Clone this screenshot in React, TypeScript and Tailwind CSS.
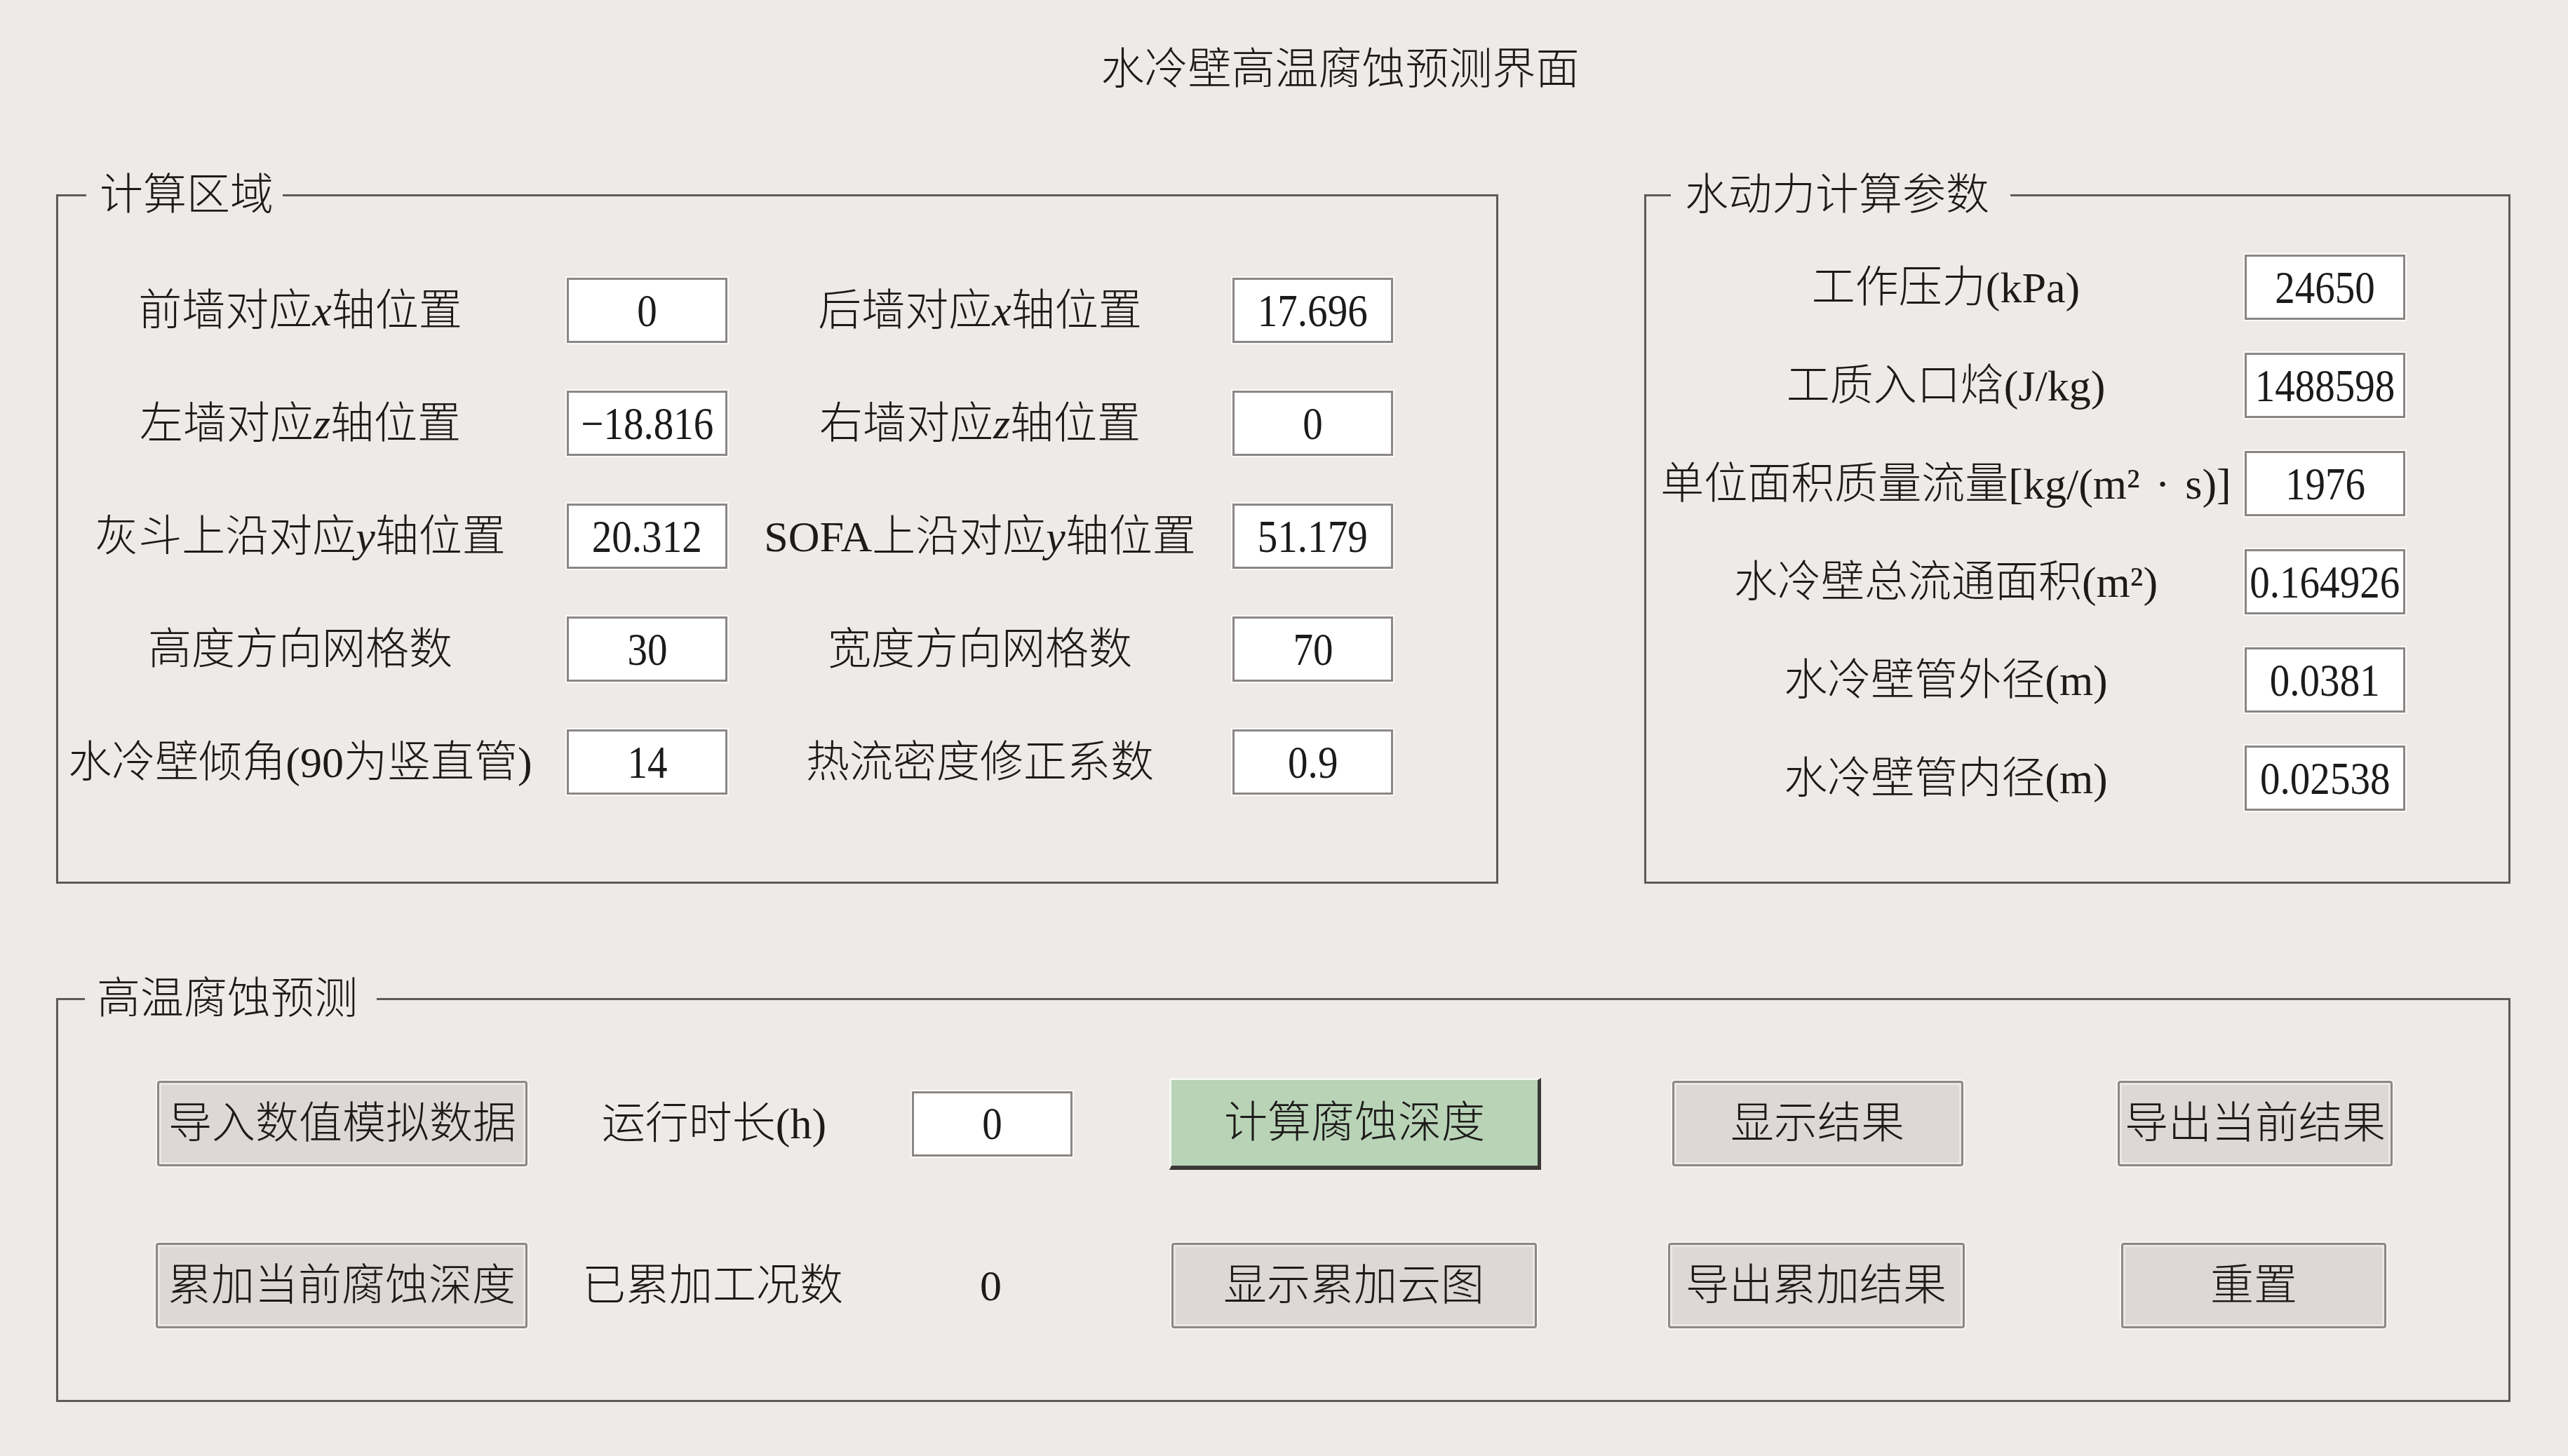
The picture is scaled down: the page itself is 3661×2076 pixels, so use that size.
import React from "react";

function Box({ v }: { v: React.ReactNode }) {
  return (
    <div className="w-[229px] h-[93px] bg-white border-[3px] border-[#8b8786] shadow-[0_0_0_2px_#fbfaf9] flex items-center justify-center whitespace-nowrap">
      <span className="inline-block scale-x-[0.92] scale-y-[1.06]">{v}</span>
    </div>
  );
}

function Label({ children }: { children: React.ReactNode }) {
  return <div className="flex items-center justify-center whitespace-nowrap">{children}</div>;
}

function GrayBtn({ w, children }: { w: string; children: React.ReactNode }) {
  return (
    <div
      className={`${w} h-[122px] bg-[#ddd8d6] border-[3px] border-[#8d8886] rounded-[4px] shadow-[inset_0_0_0_3px_#ebe7e5,0_0_0_2px_#f8f6f5] flex items-center justify-center whitespace-nowrap`}
    >
      {children}
    </div>
  );
}

const I = ({ c }: { c: string }) => <span className="italic">{c}</span>;

export default function App() {
  const rows1: [React.ReactNode, string, React.ReactNode, string][] = [
    [<>前墙对应<I c="x" />轴位置</>, "0", <>后墙对应<I c="x" />轴位置</>, "17.696"],
    [<>左墙对应<I c="z" />轴位置</>, "−18.816", <>右墙对应<I c="z" />轴位置</>, "0"],
    [<>灰斗上沿对应<I c="y" />轴位置</>, "20.312", <>SOFA上沿对应<I c="y" />轴位置</>, "51.179"],
    ["高度方向网格数", "30", "宽度方向网格数", "70"],
    ["水冷壁倾角(90为竖直管)", "14", "热流密度修正系数", "0.9"],
  ];
  const rows2: [React.ReactNode, string][] = [
    ["工作压力(kPa)", "24650"],
    ["工质入口焓(J/kg)", "1488598"],
    [<>单位面积质量流量[kg/(m²<span className="px-[22px]">·</span>s)]</>, "1976"],
    ["水冷壁总流通面积(m²)", "0.164926"],
    ["水冷壁管外径(m)", "0.0381"],
    ["水冷壁管内径(m)", "0.02538"],
  ];

  return (
    <div className="w-[3661px] h-[2076px] bg-[#eeeae7] text-[#1d1b1a] text-[62px] leading-none font-light [font-family:'Liberation_Serif','Noto_Sans_CJK_SC',serif] overflow-hidden">
      {/* title */}
      <div className="pt-[68px] h-[130px] flex justify-center pl-[160px]">
        <div className="leading-[62px]">水冷壁高温腐蚀预测界面</div>
      </div>

      {/* top panels */}
      <div className="flex pl-[80px] gap-[208px] mt-[117px]">
        <fieldset className="w-[2056px] h-[1013px] border-[3px] border-[#5e5a58]">
          <legend className="ml-[40px] pl-[19px] pr-[13px] leading-[62px]">计算区域</legend>
          <div className="pt-[87px] grid grid-cols-[690px_229px_650px_229px] gap-x-[35px] gap-y-[68px] auto-rows-[93px]">
            {rows1.map((r, i) => (
              <React.Fragment key={i}>
                <Label>{r[0]}</Label>
                <Box v={r[1]} />
                <Label>{r[2]}</Label>
                <Box v={r[3]} />
              </React.Fragment>
            ))}
          </div>
        </fieldset>

        <fieldset className="w-[1235px] h-[1013px] border-[3px] border-[#5e5a58]">
          <legend className="ml-[35px] pl-[20px] pr-[30px] leading-[62px]">水动力计算参数</legend>
          <div className="pl-[13px] pt-[54px] grid grid-cols-[828px_229px] gap-x-[12px] gap-y-[47px] auto-rows-[93px]">
            {rows2.map((r, i) => (
              <React.Fragment key={i}>
                <Label>{r[0]}</Label>
                <Box v={r[1]} />
              </React.Fragment>
            ))}
          </div>
        </fieldset>
      </div>

      {/* bottom panel */}
      <fieldset className="ml-[80px] mt-[133px] w-[3499px] h-[606px] border-[3px] border-[#5e5a58]">
        <legend className="ml-[38px] pl-[17px] pr-[27px] leading-[62px]">高温腐蚀预测</legend>
        <div className="pt-[86px] flex flex-col gap-[109px]">
          <div className="flex items-center h-[122px]">
            <div className="ml-[141px] w-[528px]">
              <GrayBtn w="w-[528px]">导入数值模拟数据</GrayBtn>
            </div>
            <div className="ml-[48px] w-[436px] flex justify-center whitespace-nowrap">运行时长(h)</div>
            <div className="ml-[64px] w-[229px]">
              <Box v="0" />
            </div>
            <div className="ml-[138px] w-[530px]">
              <div className="w-[530px] h-[131px] bg-[#b9d3b7] border-t-[3px] border-l-[3px] border-t-[#f4f7f3] border-l-[#f4f7f3] border-b-[6px] border-r-[5px] border-b-[#3a3837] border-r-[#3a3837] flex items-center justify-center whitespace-nowrap">
                计算腐蚀深度
              </div>
            </div>
            <div className="ml-[182px] w-[424px] flex justify-center">
              <GrayBtn w="w-[415px]">显示结果</GrayBtn>
            </div>
            <div className="ml-[216px] w-[392px] flex justify-center">
              <GrayBtn w="w-[392px]">导出当前结果</GrayBtn>
            </div>
          </div>

          <div className="flex items-center h-[122px]">
            <div className="ml-[139px] w-[530px]">
              <GrayBtn w="w-[530px]">累加当前腐蚀深度</GrayBtn>
            </div>
            <div className="ml-[46px] w-[436px] flex justify-center whitespace-nowrap">已累加工况数</div>
            <div className="ml-[64px] w-[229px] flex justify-center">0</div>
            <div className="ml-[138px] w-[530px] flex justify-center">
              <GrayBtn w="w-[521px]">显示累加云图</GrayBtn>
            </div>
            <div className="ml-[182px] w-[424px] flex justify-center">
              <GrayBtn w="w-[423px]">导出累加结果</GrayBtn>
            </div>
            <div className="ml-[216px] w-[392px] flex justify-center">
              <GrayBtn w="w-[378px]">重置</GrayBtn>
            </div>
          </div>
        </div>
      </fieldset>
    </div>
  );
}
